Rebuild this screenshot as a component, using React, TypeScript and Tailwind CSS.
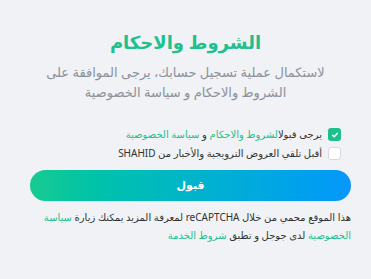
export default function App() {
  return (
    <div
      dir="rtl"
      className="w-[371px] h-[279px] bg-[#f0f2f5] overflow-hidden px-[30px]"
      style={{ fontFamily: '"Noto Sans", "DejaVu Sans", sans-serif' }}
    >
      <h1 className="pt-[30px] text-center text-[18px] font-bold leading-[24px] text-[#1fc08f]">
        الشروط والاحكام
      </h1>
      <p className="mt-[8px] text-center text-[13px] leading-[20px] text-[#8c919b]">
        لاستكمال عملية تسجيل حسابك، يرجى الموافقة على الشروط والاحكام و سياسة الخصوصية
      </p>
      <div className="mt-[26px] flex flex-col gap-[6px]">
        <label className="flex items-center gap-[6px] text-[10px] leading-[13px] text-[#333]">
          <span className="flex h-[13px] w-[13px] items-center justify-center rounded-[3px] bg-[#1dbf8e]">
            <svg viewBox="0 0 10 10" className="h-[8px] w-[8px]" fill="none" stroke="white" strokeWidth="1.8" strokeLinecap="round" strokeLinejoin="round">
              <path d="M2 5.2l2 2 4-4.4" />
            </svg>
          </span>
          <span>
            يرجى قبول<span className="text-[#1dbf8e]">الشروط والاحكام</span> و <span className="text-[#1dbf8e]">سياسة الخصوصية</span>
          </span>
        </label>
        <label className="flex items-center gap-[6px] text-[10px] leading-[13px] text-[#333]">
          <span className="h-[13px] w-[13px] rounded-[3px] border border-[#d6d9de] bg-white" />
          <span>أقبل تلقي العروض الترويجية والأخبار من SHAHID</span>
        </label>
      </div>
      <button className="mx-[-10px] mt-[10px] flex h-[31px] w-[321px] items-center justify-center rounded-full bg-gradient-to-l from-[#0a97fb] to-[#17cb90] text-[11px] font-bold text-white">
        قبول
      </button>
      <p className="mx-[-10px] mt-[7px] text-[10px] leading-[18px] text-[#333]">
        هذا الموقع محمي من خلال reCAPTCHA لمعرفة المزيد يمكنك زيارة <span className="text-[#1dbf8e]">سياسة الخصوصية</span> لدى جوجل و تطبق <span className="text-[#1dbf8e]">شروط الخدمة</span>
      </p>
    </div>
  );
}
